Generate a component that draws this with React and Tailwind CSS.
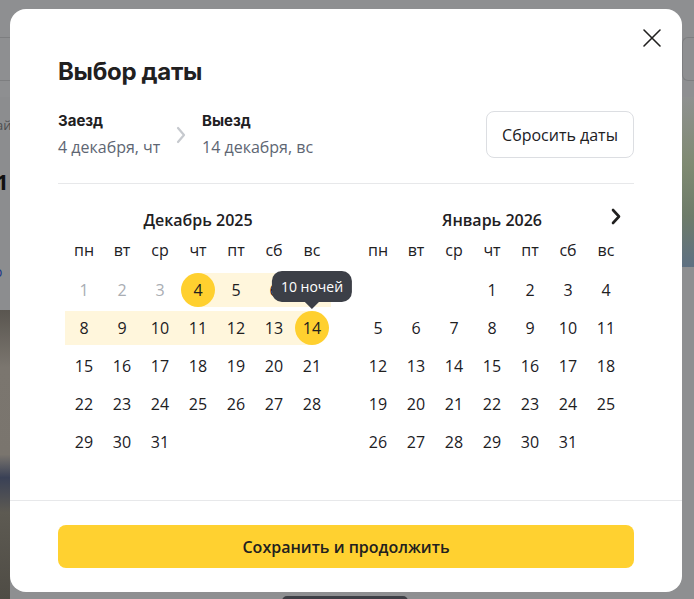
import React from "react";

const dec = [
  [1, 2, 3, 4, 5, 6, 7],
  [8, 9, 10, 11, 12, 13, 14],
  [15, 16, 17, 18, 19, 20, 21],
  [22, 23, 24, 25, 26, 27, 28],
  [29, 30, 31, null, null, null, null],
];
const jan = [
  [null, null, null, 1, 2, 3, 4],
  [5, 6, 7, 8, 9, 10, 11],
  [12, 13, 14, 15, 16, 17, 18],
  [19, 20, 21, 22, 23, 24, 25],
  [26, 27, 28, 29, 30, 31, null],
];
const wd = ["пн", "вт", "ср", "чт", "пт", "сб", "вс"];

function DayCell({ d, month }) {
  if (d === null) return <div className="h-[38px]" />;
  const isDec = month === "dec";
  const disabled = isDec && d < 4;
  const start = isDec && d === 4;
  const end = isDec && d === 14;
  const mid = isDec && d > 4 && d < 14;
  let band = "";
  if (start) band = "bg-[linear-gradient(to_right,transparent_50%,#fff6dc_50%)]";
  else if (end) band = "bg-[linear-gradient(to_right,#fff6dc_50%,transparent_50%)]";
  else if (mid) band = "bg-[#fff6dc]";
  return (
    <div className="relative h-[38px] flex items-center">
      <div className={`h-[34px] w-full flex items-center justify-center ${band}`}>
        {start || end ? (
          <div className="w-[34px] h-[34px] rounded-full bg-[#ffd02f] flex items-center justify-center text-[16px] text-[#21201f]">
            {d}
          </div>
        ) : (
          <span className={`text-[16px] ${disabled ? "text-[#a9adb3]" : "text-[#21201f]"}`}>{d}</span>
        )}
      </div>
      {end && (
        <div className="absolute bottom-[38px] left-1/2 -translate-x-1/2 flex flex-col items-center z-10">
          <div className="h-[31px] px-[9px] rounded-[10px] bg-[#3c3f47] text-white text-[14px] whitespace-nowrap flex items-center">
            10 ночей
          </div>
          <div className="w-0 h-0 border-l-[7px] border-r-[7px] border-t-[7px] border-l-transparent border-r-transparent border-t-[#3c3f47]" />
        </div>
      )}
    </div>
  );
}

function Month({ title, rows, month, arrow }) {
  return (
    <div className="w-[266px]">
      <div className="relative h-[24px] flex items-center justify-center">
        <span className="text-[16px] font-semibold text-[#21201f]">{title}</span>
        {arrow && (
          <svg className="absolute right-[3px] top-[-1px]" width="12" height="20" viewBox="0 0 12 20">
            <path d="M3 3 L9 9.5 L3 16" fill="none" stroke="#21201f" strokeWidth="2.6" strokeLinecap="round" strokeLinejoin="round" />
          </svg>
        )}
      </div>
      <div className="grid grid-cols-7 mt-[8px]">
        {wd.map((w) => (
          <div key={w} className="h-[20px] flex items-center justify-center text-[16px] text-[#21201f]">
            {w}
          </div>
        ))}
      </div>
      <div className="mt-[11px] grid grid-cols-7">
        {rows.flat().map((d, i) => (
          <DayCell key={i} d={d} month={month} />
        ))}
      </div>
    </div>
  );
}

export default function App() {
  return (
    <div className="relative w-[694px] h-[599px] overflow-hidden bg-[#8e8f91] font-['Open_Sans',sans-serif]">
      {/* backdrop page hints */}
      <div className="absolute left-0 top-[37px] w-[10px] h-[44px] border-y border-[#7d7e80]" />
      <div className="absolute right-0 top-[37px] w-[12px] h-[44px] border border-r-0 border-[#7d7e80] rounded-l-[6px]" />
      <div className="absolute left-0 top-[97px] w-[10px] h-[213px] overflow-hidden bg-[#8c8d8f]">
        <div className="absolute left-[-4px] top-[20px] text-[13px] leading-[16px] text-[#4d4e50]">ай</div>
        <div className="absolute left-[-4px] top-[70px] text-[22px] leading-[28px] font-bold text-[#111]">1|</div>
        <div className="absolute left-[-6px] top-[166px] text-[14px] leading-[18px] text-[#1e3a8a]">о</div>
      </div>
      <div className="absolute left-0 top-[310px] w-[10px] h-[289px] bg-[linear-gradient(to_bottom,#5a5650_0%,#7b766f_20%,#7a756e_50%,#3a4156_58%,#5d5a52_70%,#4f4c45_100%)]" />
      <div className="absolute right-0 top-[97px] w-[12px] h-[170px] bg-[linear-gradient(to_bottom,#8f9190_0%,#7f8a72_40%,#6e7c6a_70%,#5e7082_100%)]" />
      <div className="absolute left-[282px] top-[596px] w-[126px] h-[10px] rounded-[6px] bg-[#3d3f45]" />

      {/* modal */}
      <div className="absolute left-[10px] top-[9px] w-[672px] h-[583px] rounded-[16px] bg-white flex flex-col">
        <button className="absolute right-[19px] top-[18px] w-[22px] h-[22px] flex items-center justify-center">
          <svg width="20" height="20" viewBox="0 0 20 20">
            <path d="M2 2 L18 18 M18 2 L2 18" stroke="#21201f" strokeWidth="1.6" strokeLinecap="round" />
          </svg>
        </button>
        <div className="px-[48px] pt-[47px] flex-1">
          <h1 className="h-[32px] leading-[32px] text-[24px] font-bold text-[#21201f] font-['Inter',sans-serif] tracking-[-0.3px]">
            Выбор даты
          </h1>
          <div className="mt-[23px] flex items-start justify-between">
            <div className="flex items-start">
              <div className="w-[115px]">
                <div className="h-[20px] leading-[20px] text-[15px] font-bold text-[#21201f] font-['Inter',sans-serif]">Заезд</div>
                <div className="mt-[6px] h-[20px] leading-[20px] text-[16px] text-[#5e6673]">4 декабря, чт</div>
              </div>
              <svg className="mt-[15px] ml-[2px]" width="12" height="18" viewBox="0 0 12 18">
                <path d="M3 2 L9 9 L3 16" fill="none" stroke="#c6c9ce" strokeWidth="2.2" strokeLinecap="round" strokeLinejoin="round" />
              </svg>
              <div className="ml-[15px]">
                <div className="h-[20px] leading-[20px] text-[15px] font-bold text-[#21201f] font-['Inter',sans-serif]">Выезд</div>
                <div className="mt-[6px] h-[20px] leading-[20px] text-[16px] text-[#5e6673]">14 декабря, вс</div>
              </div>
            </div>
            <button className="h-[47px] w-[148px] rounded-[8px] border border-[#dcdee2] text-[16px] text-[#21201f]">
              Сбросить даты
            </button>
          </div>
          <div className="mt-[25px] border-t border-[#e7e8ea]" />
          <div className="mt-[24px] pl-[7px] flex gap-[28px]">
            <Month title="Декабрь 2025" rows={dec} month="dec" />
            <Month title="Январь 2026" rows={jan} month="jan" arrow />
          </div>
        </div>
        <div className="border-t border-[#e7e8ea] px-[48px] pt-[24px] pb-[24px]">
          <button className="w-full h-[43px] rounded-[8px] bg-[#ffd130] text-[16px] font-semibold text-[#21201f]">
            Сохранить и продолжить
          </button>
        </div>
      </div>
    </div>
  );
}
